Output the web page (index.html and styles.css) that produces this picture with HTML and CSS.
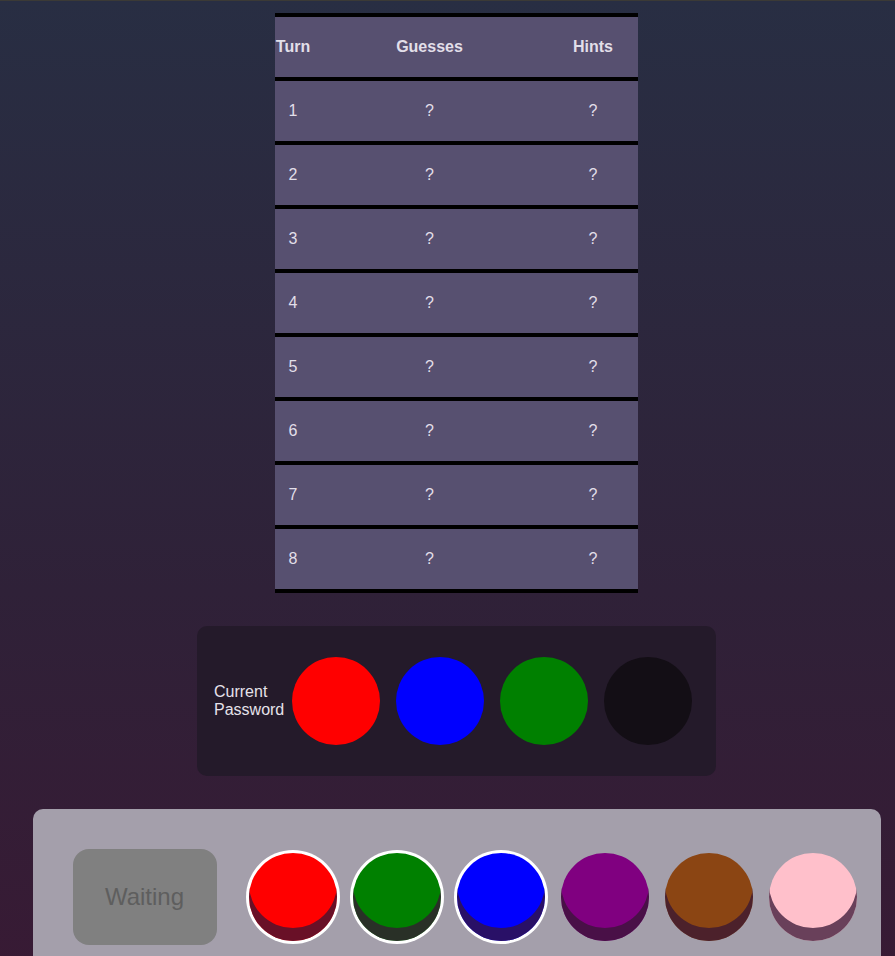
FILE: index.html
```html
<!DOCTYPE html>
<html>
<head>
<meta charset="utf-8">
<link rel="stylesheet" href="styles.css">
</head>
<body>
<div class="page">
  <table class="board">
    <thead>
      <tr><th class="c-turn">Turn</th><th class="c-guess">Guesses</th><th class="c-hint">Hints</th></tr>
    </thead>
    <tbody>
      <tr><td>1</td><td>?</td><td>?</td></tr>
      <tr><td>2</td><td>?</td><td>?</td></tr>
      <tr><td>3</td><td>?</td><td>?</td></tr>
      <tr><td>4</td><td>?</td><td>?</td></tr>
      <tr><td>5</td><td>?</td><td>?</td></tr>
      <tr><td>6</td><td>?</td><td>?</td></tr>
      <tr><td>7</td><td>?</td><td>?</td></tr>
      <tr><td>8</td><td>?</td><td>?</td></tr>
    </tbody>
  </table>

  <div class="password">
    <div class="pw-label">Current<br>Password</div>
    <div class="pw-peg red"></div>
    <div class="pw-peg blue"></div>
    <div class="pw-peg green"></div>
    <div class="pw-peg black"></div>
  </div>

  <div class="controls">
    <button class="waiting">Waiting</button>
    <div class="pick red selected"></div>
    <div class="pick green selected"></div>
    <div class="pick blue selected"></div>
    <div class="pick purple"></div>
    <div class="pick brown"></div>
    <div class="pick pink"></div>
  </div>
</div>
</body>
</html>
```
FILE: styles.css
```css
html, body {
  margin: 0;
  padding: 0;
}
body {
  min-height: 100vh;
  background: linear-gradient(180deg, #282e43 0%, #2f2138 60%, #381a34 100%);
  border-top: 1px solid #3b3a36;
  box-sizing: border-box;
  font-family: "Liberation Sans", Arial, sans-serif;
  overflow: hidden;
}
.page {
  display: flex;
  flex-direction: column;
  align-items: center;
  padding: 12px 0 0 18px;
}
.board {
  width: 363px;
  border-collapse: separate;
  border-spacing: 0;
  background: #575070;
  color: #e2dfe9;
  font-size: 16px;
  table-layout: fixed;
}
.board th,
.board td {
  padding: 0;
  height: 64px;
  text-align: center;
  border-bottom: 4px solid #000;
  box-sizing: border-box;
}
.board th {
  height: 68px;
  border-top: 4px solid #000;
  font-weight: bold;
}
.c-turn { width: 36px; }
.c-guess { width: 237px; }
.c-hint { width: 90px; }

.password {
  margin-top: 33px;
  width: 519px;
  height: 150px;
  box-sizing: border-box;
  background: #241a2a;
  border-radius: 10px;
  display: flex;
  align-items: center;
  padding-left: 17px;
  gap: 16px;
}
.pw-label {
  color: #e6e2ea;
  font-size: 16px;
  line-height: 18px;
  margin-right: -8px;
}
.pw-peg {
  flex-shrink: 0;
  width: 88px;
  height: 88px;
  border-radius: 50%;
}
.pw-peg.red { background: #ff0000; }
.pw-peg.blue { background: #0000ff; }
.pw-peg.green { background: #008000; }
.pw-peg.black { background: #130e15; }

.controls {
  margin-top: 33px;
  width: 848px;
  box-sizing: border-box;
  background: #a49fab;
  border-radius: 10px;
  padding: 40px;
  display: flex;
  align-items: center;
  gap: 16px;
}
.waiting {
  flex-shrink: 0;
  width: 144px;
  height: 96px;
  border: none;
  border-radius: 16px;
  background: #808080;
  color: #5e5e5e;
  font-family: "Liberation Sans", Arial, sans-serif;
  font-size: 24px;
  margin-right: 16px;
  padding: 0;
}
.pick {
  flex-shrink: 0;
  width: 88px;
  height: 88px;
  border-radius: 50%;
  box-shadow: inset 0 -13px 0 rgba(55, 21, 52, 0.75);
}
.pick.selected {
  box-shadow: 0 0 0 3px #ffffff, inset 0 -13px 0 rgba(55, 21, 52, 0.75);
}
.pick.red { background: #ff0000; }
.pick.green { background: #008000; }
.pick.blue { background: #0000ff; }
.pick.purple { background: #800080; }
.pick.brown { background: #8b4513; }
.pick.pink { background: #ffc0cb; }
```
